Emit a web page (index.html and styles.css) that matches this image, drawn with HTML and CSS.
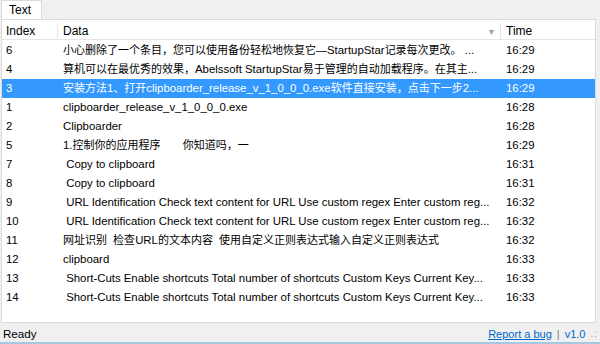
FILE: index.html
```html
<!DOCTYPE html>
<html lang="en">
<head>
    <meta charset="UTF-8">
    <title>Clipboarder</title>
    <link rel="stylesheet" href="styles.css">
</head>
<body>
    <div class="tabs">
        <div class="tab">Text</div>
    </div>

    <div class="list">
        <div class="row head">
            <div class="c-index">Index</div>
            <div class="c-data">Data<span class="sort">&#9662;</span></div>
            <div class="c-time">Time</div>
        </div>
        <div class="row"><div class="c-index">6</div><div class="c-data"><span class="zh">小心删除了一个条目，您可以使用备份轻松地恢复它—</span>StartupStar<span class="zh">记录每次更改。</span> ...</div><div class="c-time">16:29</div></div>
        <div class="row"><div class="c-index">4</div><div class="c-data"><span class="zh">算机可以在最优秀的效果，</span>Abelssoft StartupStar<span class="zh">易于管理的自动加载程序。在其主</span>...</div><div class="c-time">16:29</div></div>
        <div class="row selected"><div class="c-index">3</div><div class="c-data"><span class="zh">安装方法</span>1<span class="zh">、打开</span>clipboarder_release_v_1_0_0_0.exe<span class="zh">软件直接安装，点击下一步</span>2...</div><div class="c-time">16:29</div></div>
        <div class="row"><div class="c-index">1</div><div class="c-data">clipboarder_release_v_1_0_0_0.exe</div><div class="c-time">16:28</div></div>
        <div class="row"><div class="c-index">2</div><div class="c-data">Clipboarder</div><div class="c-time">16:28</div></div>
        <div class="row"><div class="c-index">5</div><div class="c-data">1.<span class="zh">控制你的应用程序</span>&nbsp;&nbsp;&nbsp;&nbsp;&nbsp;&nbsp;&nbsp;<span class="zh">你知道吗，一</span></div><div class="c-time">16:29</div></div>
        <div class="row"><div class="c-index">7</div><div class="c-data">&nbsp;Copy to clipboard</div><div class="c-time">16:31</div></div>
        <div class="row"><div class="c-index">8</div><div class="c-data">&nbsp;Copy to clipboard</div><div class="c-time">16:31</div></div>
        <div class="row"><div class="c-index">9</div><div class="c-data">&nbsp;URL Identification Check text content for URL Use custom regex Enter custom reg...</div><div class="c-time">16:32</div></div>
        <div class="row"><div class="c-index">10</div><div class="c-data">&nbsp;URL Identification Check text content for URL Use custom regex Enter custom reg...</div><div class="c-time">16:32</div></div>
        <div class="row"><div class="c-index">11</div><div class="c-data"><span class="zh">网址识别&nbsp;&nbsp;检查</span>URL<span class="zh">的文本内容&nbsp;&nbsp;使用自定义正则表达式输入自定义正则表达式</span></div><div class="c-time">16:32</div></div>
        <div class="row"><div class="c-index">12</div><div class="c-data">clipboard</div><div class="c-time">16:33</div></div>
        <div class="row"><div class="c-index">13</div><div class="c-data">&nbsp;Short-Cuts Enable shortcuts Total number of shortcuts Custom Keys Current Key...</div><div class="c-time">16:33</div></div>
        <div class="row"><div class="c-index">14</div><div class="c-data">&nbsp;Short-Cuts Enable shortcuts Total number of shortcuts Custom Keys Current Key...</div><div class="c-time">16:33</div></div>
    </div>

    <div class="status">
        <span class="ready">Ready</span>
        <span class="right">
            <a href="#" class="bug">Report a bug</a>
            <span class="sep">|</span>
            <span class="ver">v1.0</span>
            <span class="grip">.:</span>
        </span>
    </div>
</body>
</html>
```

FILE: styles.css
```css
body {
    margin: 0;
    width: 600px;
    height: 344px;
    overflow: hidden;
    background-color: #f0f0f0;
    font-family: "Liberation Sans", "Noto Sans CJK SC", sans-serif;
    font-size: 11.4px;
    color: #000;
    display: flex;
    flex-direction: column;
}

.zh {
    font-size: 11px;
}

.tabs {
    height: 19px;
    display: flex;
    padding-left: 1px;
}

.tab {
    width: 41px;
    height: 19px;
    box-sizing: border-box;
    background-color: #fff;
    border: 1px solid #dadada;
    border-bottom: none;
    padding: 2px 0 0 7px;
    font-size: 12px;
}

.list {
    height: 302px;
    margin: 0 4px 0 1px;
    background-color: #fff;
    border: 1px solid #dadada;
    overflow: hidden;
}

.row {
    display: flex;
    height: 19px;
    line-height: 19px;
    white-space: nowrap;
}

.row.head {
    height: 20px;
    padding-top: 3px;
    box-sizing: border-box;
    line-height: 17px;
    border-bottom: 1px solid #e5e5e5;
    margin-bottom: 1px;
    font-size: 12px;
}

.c-index {
    width: 56px;
    padding-left: 4px;
    box-sizing: border-box;
}

.c-data {
    width: 443px;
    padding: 0 6px 0 5px;
    box-sizing: border-box;
    overflow: hidden;
}

.c-time {
    flex: 1;
    padding-left: 5px;
}

.head .c-index,
.head .c-data {
    border-right: 1px solid #e5e5e5;
}

.head .c-data {
    position: relative;
}

.sort {
    position: absolute;
    right: 6px;
    top: 0;
    color: #a0a0a0;
    font-size: 10px;
}

.row.selected {
    background-color: #3399ff;
    color: #fff;
}

.status {
    flex: 1;
    display: flex;
    justify-content: space-between;
    align-items: center;
    padding: 2px 2px 0 3px;
    border-bottom: 2px solid #a6c8e0;
    box-sizing: border-box;
    font-size: 11px;
}

.ready {
    font-size: 11.6px;
}

.right {
    display: flex;
    align-items: center;
    gap: 5px;
}

.bug {
    color: #0066cc;
}

.sep {
    color: #808080;
}

.ver {
    color: #0066cc;
}

.grip {
    color: #a0a0a0;
    font-size: 10px;
    letter-spacing: 1px;
}
```
